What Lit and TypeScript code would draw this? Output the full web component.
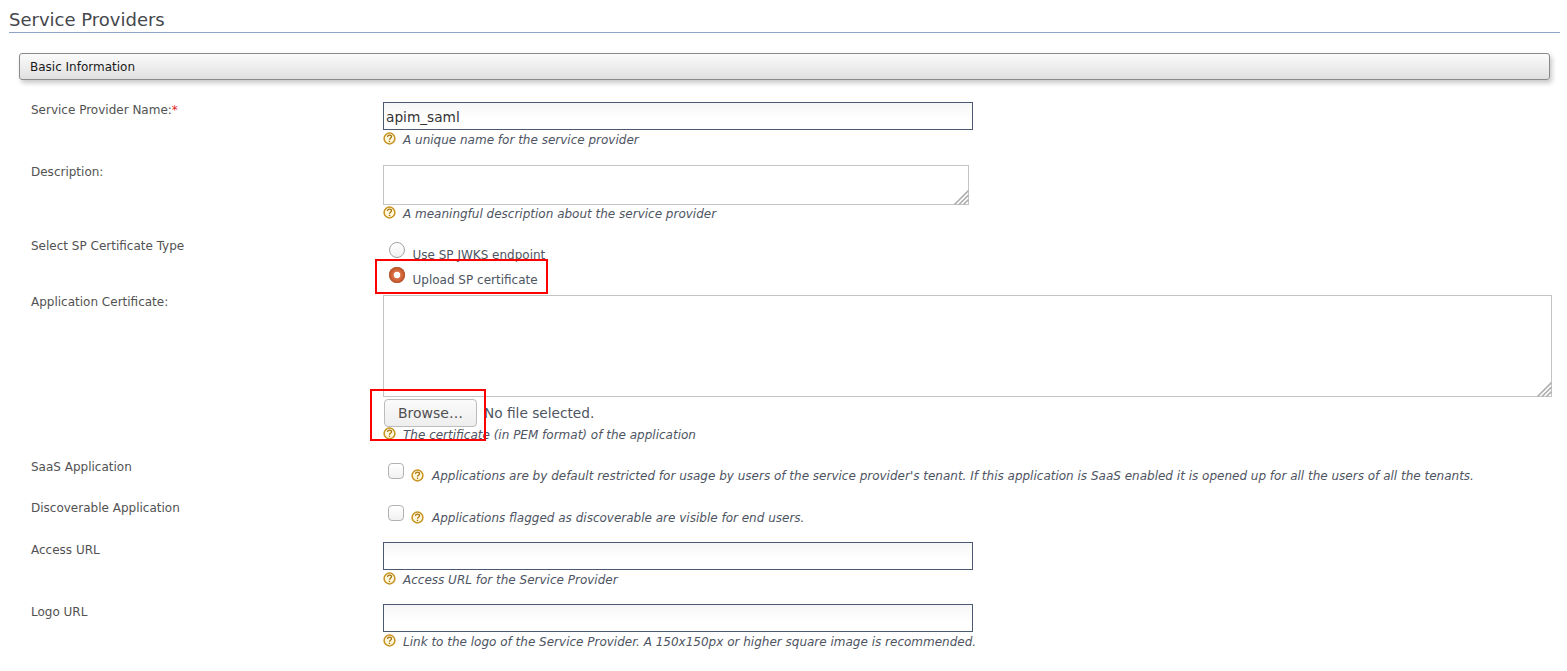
import { LitElement, html, css, svg } from "lit";
import { customElement } from "lit/decorators.js";

const helpIcon = html`<svg class="help-icon" width="13" height="13" viewBox="0 0 13 13" aria-hidden="true">
  <circle cx="6.5" cy="6.5" r="5.4" fill="#fff8dc" stroke="#c8921e" stroke-width="1.5"></circle>
  <path d="M4.5 5c.1-1.2 1-1.8 2-1.8 1.2 0 2 .7 2 1.6 0 1.4-2 1.5-2 2.9" fill="none" stroke="#a8760e" stroke-width="1.3"></path>
  <rect x="5.85" y="8.7" width="1.3" height="1.4" fill="#a8760e"></rect>
</svg>`;

const grip = svg`<path d="M15.5 1.5 1.5 15.5M15.5 6 6 15.5M15.5 10.5 10.5 15.5" stroke="#b0b0b0" stroke-width="1.7" fill="none"></path>`;

@customElement("app-root")
export class AppRoot extends LitElement {
  static styles = css`
    :host {
      display: block;
      width: 1567px;
      height: 671px;
      overflow: hidden;
      background: #fff;
      font-family: "DejaVu Sans", sans-serif;
      font-size: 12px;
      color: #4f4f4f;
      box-sizing: border-box;
      padding: 0 7px 0 9px;
    }
    h2 {
      margin: 0;
      font-size: 18px;
      font-weight: 400;
      line-height: 20px;
      color: #45474d;
      box-sizing: border-box;
      padding-top: 10px;
      border-bottom: 1px solid #8ea3c6;
      height: 33px;
    }
    .section {
      margin: 20px 10px 0 10px;
      height: 27px;
      box-sizing: border-box;
      border: 1px solid #8a8a8a;
      border-radius: 3px;
      background: linear-gradient(#fbfbfb, #e0e0e0);
      box-shadow: 2px 3px 5px rgba(0, 0, 0, 0.22);
      padding: 1px 0 0 10px;
      line-height: 25px;
      color: #1a1a1a;
    }
    form {
      display: block;
      position: relative;
      padding: 22px 0 0 22px;
    }
    .row {
      display: grid;
      grid-template-columns: 352px 1fr;
    }
    .label {
      line-height: 14px;
      color: #525252;
      padding-top: 1px;
    }
    .label.flush {
      padding-top: 0;
    }
    .label.low {
      padding-top: 2px;
    }
    .req {
      color: #e8202a;
    }
    .field {
      display: flex;
      flex-direction: column;
      align-items: flex-start;
      min-width: 0;
    }
    .text {
      width: 590px;
      height: 28px;
      box-sizing: border-box;
      border: 1px solid #4b5a72;
      background: linear-gradient(#f6f6f6, #ffffff 60%);
      font: 13.7px "DejaVu Sans", sans-serif;
      color: #333;
      padding: 1px 2px 0;
      margin: 0;
      outline: none;
    }
    .area {
      position: relative;
      display: flex;
    }
    textarea {
      display: block;
      box-sizing: border-box;
      border: 1px solid #c4c4c4;
      background: #fff;
      margin: 0;
      padding: 0;
      resize: none;
      outline: none;
    }
    .grip {
      position: absolute;
      right: 0;
      bottom: 0;
      width: 16px;
      height: 16px;
    }
    .help {
      display: flex;
      align-items: center;
      gap: 7px;
      height: 16px;
      line-height: 16px;
      font-style: italic;
      font-size: 12px;
      color: #4e5462;
      white-space: nowrap;
      margin-top: 1px;
    }
    .text + .help {
      margin-top: 2px;
    }
    .file + .help {
      margin-top: 0;
    }
    .help-icon {
      flex: none;
      position: relative;
      top: -2px;
    }
    .radio-line {
      display: flex;
      align-items: flex-start;
      height: 25px;
      padding-left: 6px;
      color: #4e5462;
      white-space: nowrap;
    }
    .radio-line span {
      margin: 9px 0 0 7.5px;
      line-height: 14px;
    }
    input[type="radio"] {
      appearance: none;
      width: 16px;
      height: 16px;
      box-sizing: border-box;
      border-radius: 50%;
      border: 1px solid #a2a2a2;
      background: linear-gradient(#fff, #f0f0f0);
      margin: 3px 0 0;
    }
    input[type="radio"]:checked {
      border: none;
      background: radial-gradient(circle at 50% 50%, #fff 0 3px, #d9764e 3.6px, #cf5f33 6px, #bd4f26 8px);
      box-shadow: inset 0 0 0 1px #b85a34;
    }
    input[type="checkbox"] {
      appearance: none;
      margin: 0;
      width: 16px;
      height: 16px;
      box-sizing: border-box;
      border: 1px solid #b2b2b2;
      border-radius: 4px;
      background: linear-gradient(#fff, #f1f1f1);
      flex: none;
    }
    .check-line {
      display: flex;
      align-items: flex-start;
      padding: 5px 0 0 5px;
    }
    .check-line .help {
      margin: 5px 0 0 7px;
      gap: 8px;
    }
    .check-line .help-icon {
      top: -1px;
    }
    .file {
      display: flex;
      align-items: center;
      margin: 2px 0 0 1px;
      font-size: 13.7px;
      color: #4e5462;
    }
    .file button {
      width: 93px;
      height: 28px;
      box-sizing: border-box;
      border: 1px solid #bcbcbc;
      border-radius: 4px;
      background: linear-gradient(#fbfbfb, #eeeeee);
      font: 14px "DejaVu Sans", sans-serif;
      color: #4f4f4f;
      padding: 0;
      margin-right: 7px;
    }
    .mark {
      position: absolute;
      box-sizing: border-box;
      border: 2px solid #ff0000;
      pointer-events: none;
    }
    .mark.upload {
      left: 366px;
      top: 179px;
      width: 173px;
      height: 35px;
    }
    .mark.browse {
      left: 361px;
      top: 309px;
      width: 116px;
      height: 52px;
    }
    .r-name { height: 63px; }
    .r-desc { height: 74px; }
    .r-select { height: 56px; }
    .r-cert { height: 163px; }
    .r-saas { height: 42px; }
    .r-disc { height: 42px; }
    .r-access { height: 62px; }
    .r-logo { height: 62px; }
  `;

  private help(text: string) {
    return html`<div class="help">${helpIcon}<span>${text}</span></div>`;
  }

  render() {
    return html`
      <h2>Service Providers</h2>
      <div class="section">Basic Information</div>
      <form>
        <div class="row r-name">
          <div class="label">Service Provider Name:<span class="req">*</span></div>
          <div class="field">
            <input class="text" type="text" .value=${"apim_saml"} />
            ${this.help("A unique name for the service provider")}
          </div>
        </div>
        <div class="row r-desc">
          <div class="label flush">Description:</div>
          <div class="field">
            <div class="area">
              <textarea style="width:586px;height:40px"></textarea>
              <svg class="grip" viewBox="0 0 16 16">${grip}</svg>
            </div>
            ${this.help("A meaningful description about the service provider")}
          </div>
        </div>
        <div class="row r-select">
          <div class="label flush">Select SP Certificate Type</div>
          <div class="field">
            <label class="radio-line"><input type="radio" name="cert" /><span>Use SP JWKS endpoint</span></label>
            <label class="radio-line"><input type="radio" name="cert" checked /><span>Upload SP certificate</span></label>
          </div>
        </div>
        <div class="row r-cert">
          <div class="label flush">Application Certificate:</div>
          <div class="field">
            <div class="area">
              <textarea style="width:1169px;height:102px"></textarea>
              <svg class="grip" viewBox="0 0 16 16">${grip}</svg>
            </div>
            <div class="file"><button type="button">Browse…</button><span>No file selected.</span></div>
            ${this.help("The certificate (in PEM format) of the application")}
          </div>
        </div>
        <div class="row r-saas">
          <div class="label low">SaaS Application</div>
          <div class="check-line">
            <input type="checkbox" />
            ${this.help("Applications are by default restricted for usage by users of the service provider's tenant. If this application is SaaS enabled it is opened up for all the users of all the tenants.")}
          </div>
        </div>
        <div class="row r-disc">
          <div class="label">Discoverable Application</div>
          <div class="check-line">
            <input type="checkbox" />
            ${this.help("Applications flagged as discoverable are visible for end users.")}
          </div>
        </div>
        <div class="row r-access">
          <div class="label">Access URL</div>
          <div class="field">
            <input class="text" type="text" />
            ${this.help("Access URL for the Service Provider")}
          </div>
        </div>
        <div class="row r-logo">
          <div class="label">Logo URL</div>
          <div class="field">
            <input class="text" type="text" />
            ${this.help("Link to the logo of the Service Provider. A 150x150px or higher square image is recommended.")}
          </div>
        </div>
        <div class="mark upload"></div>
        <div class="mark browse"></div>
      </form>
    `;
  }
}
